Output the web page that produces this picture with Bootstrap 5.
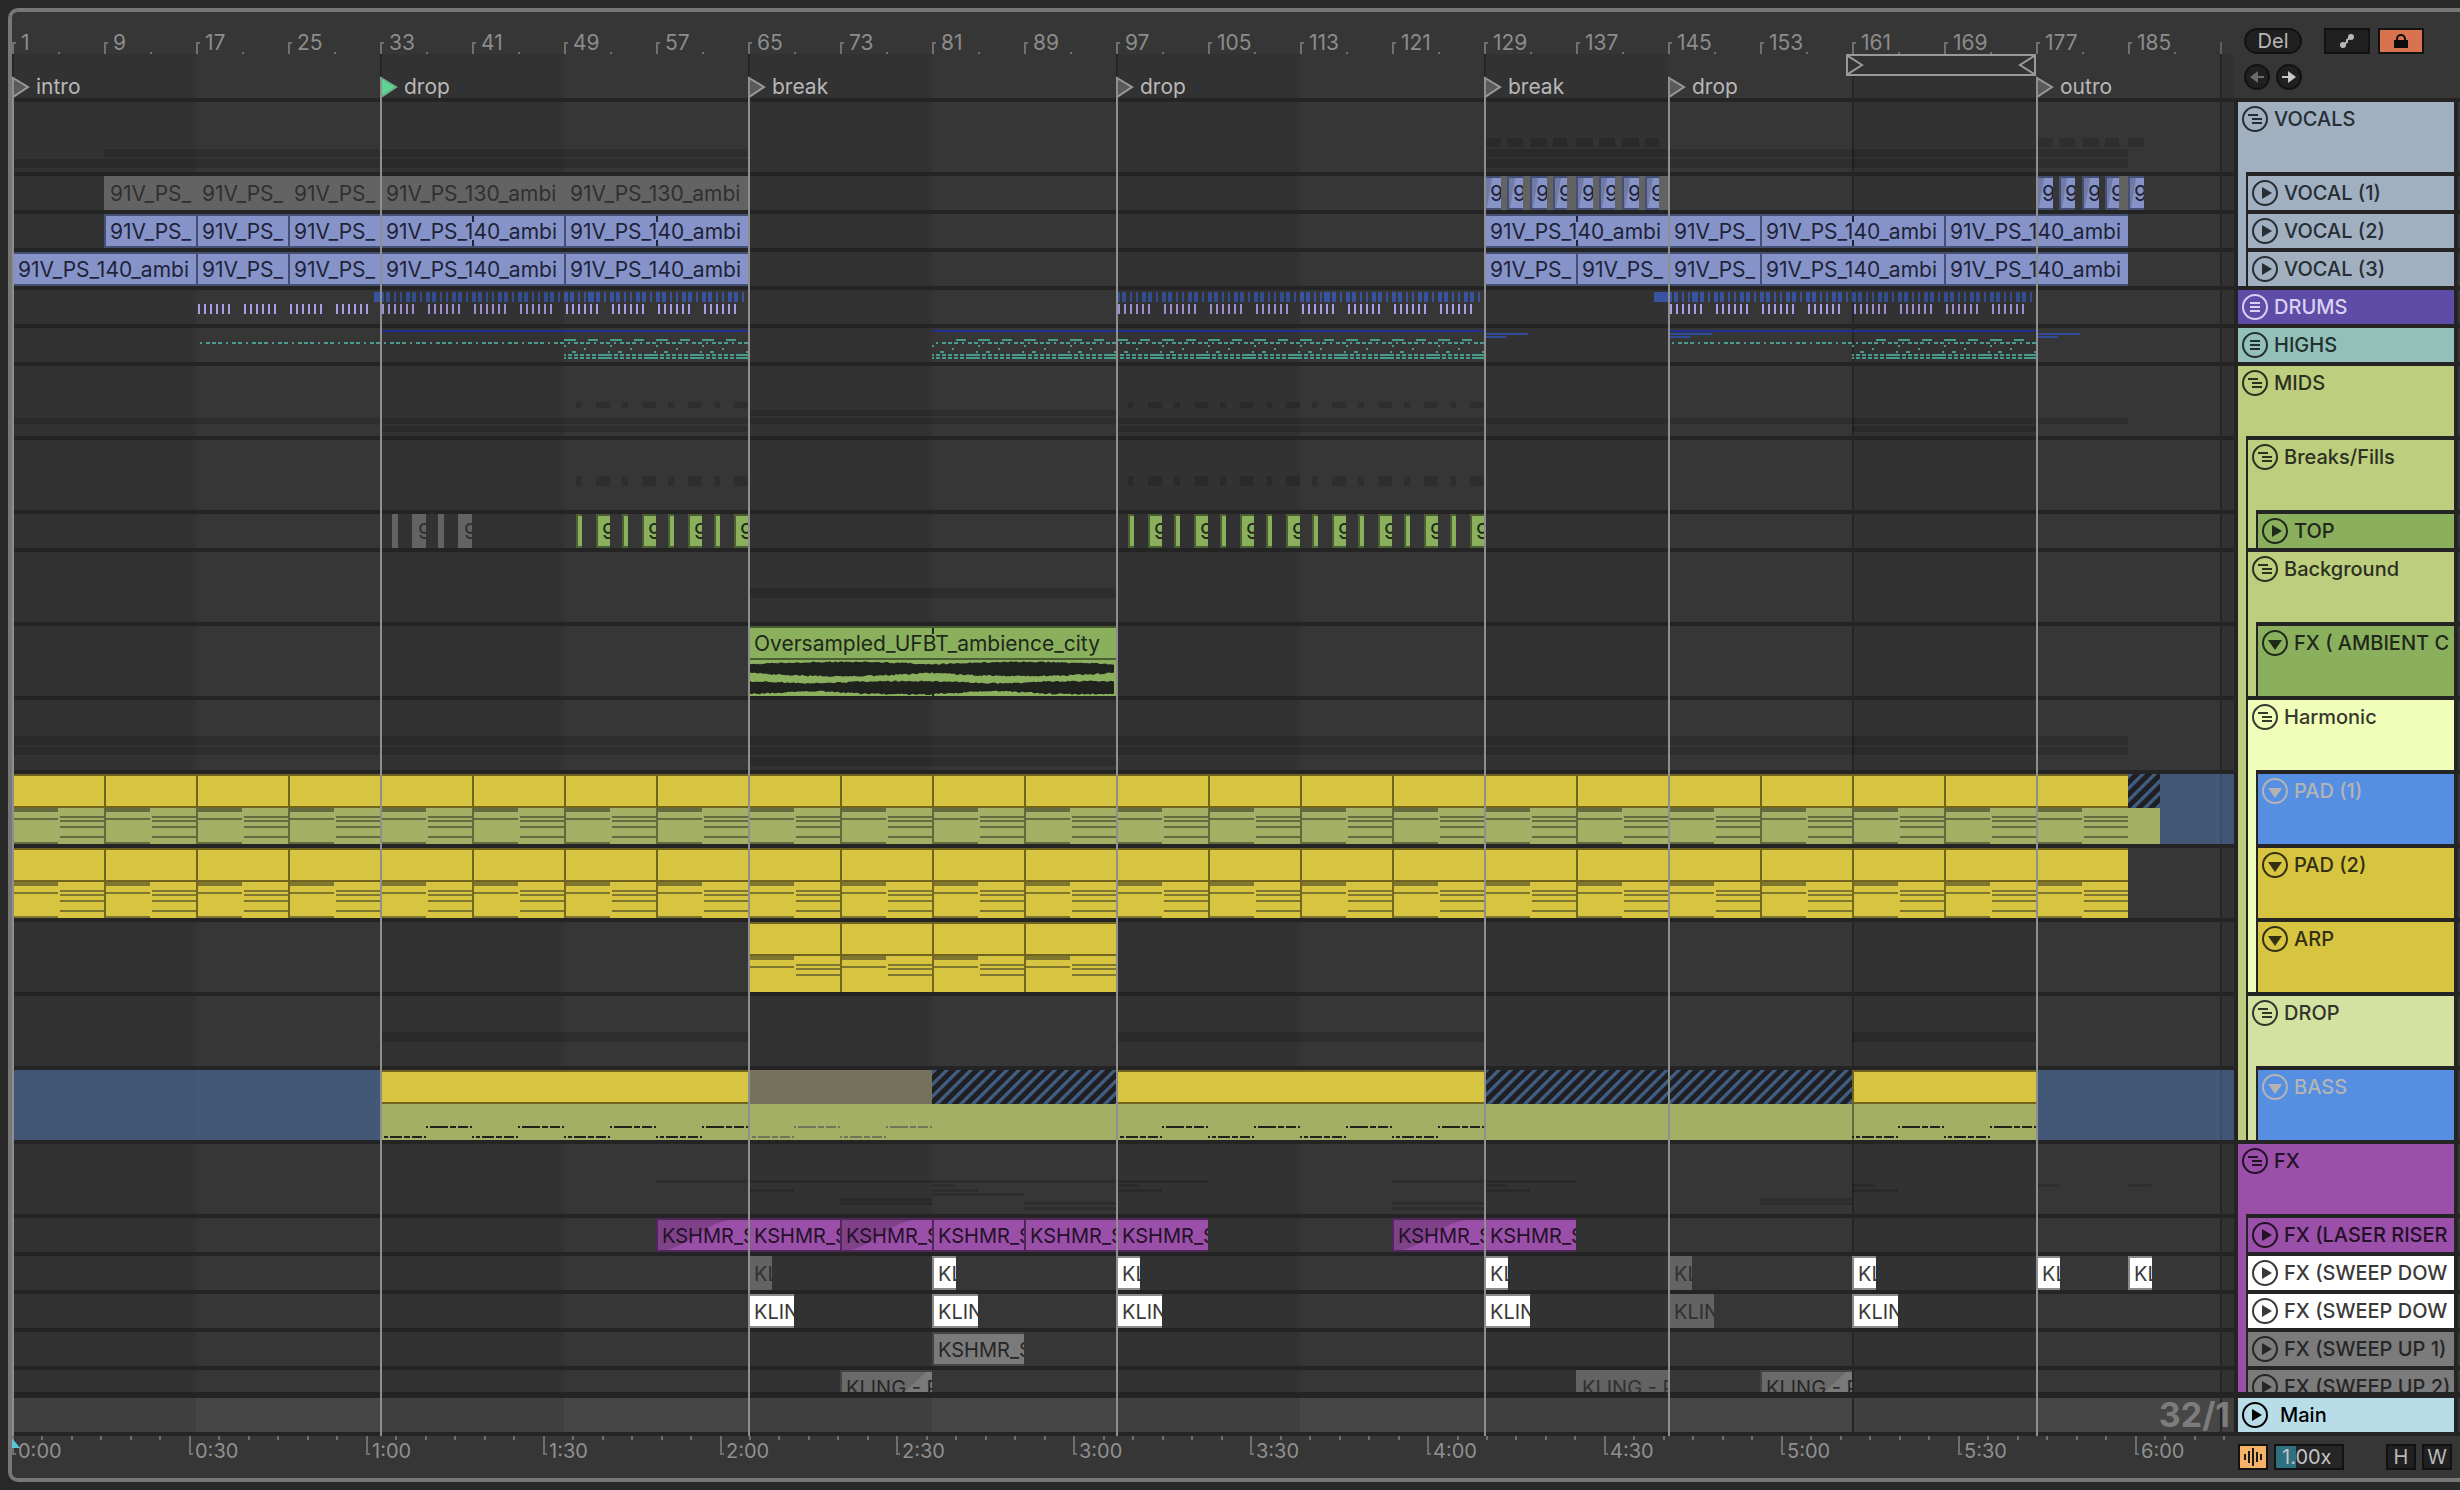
<!DOCTYPE html>
<html lang="en">
<head>
<meta charset="utf-8">
<meta name="viewport" content="width=device-width, initial-scale=1">
<title>Arrangement</title>
<link href="https://cdn.jsdelivr.net/npm/bootstrap@5.3.0/dist/css/bootstrap.min.css" rel="stylesheet">
<style>
:root { --gap: #242424; --panel: #363636; --shade: #323232; --frame: #777; --line: #252525; --side: 226px; }
body { background: #282828; font-family: Inter, "Liberation Sans", sans-serif; font-size: 20px; line-height: 24px; color: #999; }
.arrangement { height: 100vh; padding: 8px 0 8px 8px; }
.frame { border: 4px solid var(--frame); border-right: 0; border-radius: 10px 0 0 10px; background: var(--gap); overflow: hidden; }
.timeline { min-width: 0; overflow: hidden; }
.side { width: var(--side); flex: none; }
.grid-bg {
  background-image:
    repeating-linear-gradient(90deg, #252525 0 2px, transparent 2px 368px),
    repeating-linear-gradient(90deg, var(--shade) 0 184px, var(--panel) 184px 368px);
}
.lane {
  position: relative; overflow: hidden; margin-top: 4px;
  background-image:
    linear-gradient(90deg, transparent 1840px, var(--line) 1840px 1842px, transparent 1842px 2208px, var(--line) 2208px 2210px, transparent 2210px),
    repeating-linear-gradient(90deg, var(--shade) 0 184px, var(--panel) 184px 368px);
}
.lane.selected { --shade: #405674; --panel: #435876; --line: #394e6b; }
.lane svg.notes { position: absolute; inset: 0; width: 100%; height: 100%; pointer-events: none; }

/* top rulers */
.topbar { background: var(--panel); height: 86px; }
.bars { height: 42px; overflow: hidden; color: #8c8c8c; font-size: 21px; }
.bars > div {
  width: 92px; flex: none; padding: 19px 0 0 9px;
  background:
    linear-gradient(#707070, #707070) 0 30px / 2px 12px no-repeat,
    linear-gradient(#707070, #707070) 0 30px / 4px 2px no-repeat,
    linear-gradient(#707070, #707070) 46px 40px / 2px 2px no-repeat;
}
.bars > div:last-child { background: linear-gradient(#606060, #606060) 0 30px / 2px 12px no-repeat; }
.locators { height: 44px; position: relative; overflow: hidden; }
.locator { position: absolute; top: 22px; gap: 6px; color: #b8b8b8; line-height: 22px; border: 0; background: none; padding: 0; font-size: 21px; }
.locator svg { display: block; }
.brace { position: absolute; top: 0; height: 22px; border: 2px solid #999; background: #333; }
.cue-lines { position: absolute; inset: 65px var(--side) 42px 0; pointer-events: none; overflow: hidden; }
.cue-lines i { position: absolute; top: 0; bottom: 0; width: 2px; background: #8e8e8e; }
.side-tools { padding: 16px 0 0 6px; }
.side-nav { padding: 10px 0 0 6px; gap: 6px; }
.pill, .tool { border: 2px solid #121212; background: #202020; color: #b8b8b8; height: 26px; padding: 0; line-height: 22px; display: flex; align-items: center; justify-content: center; }
.pill { width: 58px; border-radius: 13px; }
.round { width: 26px; border-radius: 50%; }
.tool { width: 46px; }
.tool.locked { background: #d9734f; }
.key { width: 30px; }
.follow { background: #f6b266; }
.gap-left { margin-left: 6px; }
.gap-wide { margin-left: 22px; }
.tempo { width: 70px; height: 26px; border: 2px solid #121212; padding: 0 0 0 6px; color: #c4c4c4; line-height: 22px; background: linear-gradient(90deg, #2f7080 20px, #262626 20px); border-radius: 0; outline: 0; }

/* tracks */
.tracks { min-height: 0; overflow: hidden; }
.head { color: #262e34; font-weight: 500; }
.strip { width: 8px; flex: none; margin-right: 2px; }
.title-bar { margin-top: 4px; padding: 4px 0 0 4px; min-width: 0; flex: 1; overflow: hidden; white-space: nowrap; }
.title-bar button { border: 0; padding: 0; background: none; color: inherit; width: 26px; height: 26px; flex: none; }
.title-bar svg, .tool svg, .round svg { display: block; flex: none; }
.title-bar span { line-height: 26px; margin-left: 6px; }
.title-bar .master-name { margin-left: 12px; }
.rail { width: 2px; flex: none; margin: 4px 0 0 4px; background: #363636; }

/* clips */
.clip { position: absolute; top: 0; bottom: 0; overflow: hidden; white-space: nowrap; font-size: 21px; line-height: 32px; padding-left: 4px; border: 0 solid var(--edge); border-width: 2px 0 2px 2px; background: var(--fill); color: var(--ink); }
.clip .fade-in { position: absolute; left: 0; top: 0; height: 100%; }
.clip .fade-in + span { position: relative; }
.clip.blue { --fill: #8693c8; --edge: #454f73; --ink: #1f2338; }
.clip.green { --fill: #8ab05d; --edge: #4b6032; --ink: #20281a; }
.clip.purple { --fill: #9a50a9; --edge: #4e2856; --ink: #241128; }
.clip.white { --fill: #fff; --edge: #8a8a8a; --ink: #3a3a3a; }
.clip.gray { --fill: #7a7a7a; --edge: #444; --ink: #262626; }
.clip.muted { --fill: #636363; --edge: #636363; --ink: #303030; }
.clip.effect { font-size: 20px; }
.clip.tall { padding: 0; border-width: 0; background: none; }
.clip.tall .cap { height: 34px; border: 2px solid #70641f; border-width: 2px 0 2px 0; background: #d7c441; padding-left: 6px; line-height: 32px; color: #20281a; }
.clip.tall .pane { height: 36px; background: #d7c441; }
.clip.tall.sel .pane { background: #a2af64; }
.clip.tall.edge .cap { border-left: 2px solid #70641f; }
.clip.tall.edge .pane { border-left: 2px solid #746821; }
.clip.tall.sel.edge .pane { border-left-color: #62693e; }
.clip.tall.off .cap { background: #76725d; border-color: #76725d; }
.clip.tall.hatch .cap { border: 0; background: linear-gradient(135deg, #425c7e 0 20%, #1e2024 24% 50%, #425c7e 52% 70%, #1e2024 74%) 0 0 / 12px 12px; }
.clip.tall.audio .cap { background: #8ab05d; border-color: #4b6032; }
.clip.tall.audio .pane { background: #8ab05d; }

.main-row { border-top: 2px solid var(--gap); border-bottom: 4px solid var(--gap); height: 44px; }
.main-row .lane { --shade: #404040; --panel: #464646; border-left: 2px solid #b8dce8; background-position: -2px 0; }
.grid-size { position: absolute; right: 4px; top: 0; font-size: 34px; font-weight: 700; line-height: 34px; color: #7c7c7c; }
.footer-bar { background: var(--panel); height: 42px; }
.clock { position: relative; overflow: hidden; color: #909090; }
.clock i { position: absolute; top: 0; width: 2px; height: 4px; background: #6e6e6e; }
.clock span { position: absolute; top: 0; height: 19px; padding: 3px 0 0 4px; border-left: 2px solid #6e6e6e; line-height: 24px; background: linear-gradient(#6e6e6e, #6e6e6e) 0 17px / 2px 2px no-repeat; }
.clock svg { position: absolute; left: 0; top: 2px; }
.side-foot { padding: 8px 8px 0 4px; }
</style>
</head>
<body class="m-0 overflow-hidden">
<main class="arrangement">
  <div class="frame d-flex flex-column h-100 position-relative">

    <header class="topbar d-flex flex-shrink-0">
      <div class="timeline flex-grow-1">
        <div class="bars d-flex" id="bars"></div>
        <div class="locators grid-bg" id="locators"></div>
      </div>
      <div class="side ps-1">
        <div class="side-tools d-flex">
          <button class="pill" type="button">Del</button>
          <button class="tool gap-wide" type="button" aria-label="Automation mode">
            <svg width="42" height="22" viewBox="0 0 42 22" fill="#b8b8b8"><circle cx="17" cy="15" r="3"/><circle cx="25" cy="7" r="3"/><path d="M17 15l4-3 0-2 4-3" stroke="#b8b8b8" stroke-width="2" fill="none"/></svg>
          </button>
          <button class="tool locked ms-2" type="button" aria-label="Lock envelopes">
            <svg width="42" height="22" viewBox="0 0 42 22"><path d="M14 10h14v8H14z" fill="#0c0c0c"/><path d="M17 11V9a4 4 0 0 1 8 0v2" stroke="#0c0c0c" stroke-width="2" fill="none"/></svg>
          </button>
        </div>
        <div class="side-nav d-flex" id="nav"></div>
      </div>
    </header>

    <section class="tracks flex-grow-1" id="tracks"></section>

    <section class="main-row d-flex flex-shrink-0">
      <div class="timeline lane flex-grow-1"><div class="grid-size">32/1</div></div>
      <div class="side head d-flex ps-1">
        <div class="title-bar d-flex text-black" style="background:#b8dce8">
          <button type="button" aria-label="Unfold Main"><svg width="26" height="26" viewBox="0 0 26 26"><circle cx="13" cy="13" r="12" fill="none" stroke="currentColor" stroke-width="2"/><path d="M10 7l10 6-10 6z" fill="currentColor"/></svg></button>
          <span class="master-name">Main</span>
        </div>
        <div class="rail"></div>
      </div>
    </section>

    <footer class="footer-bar d-flex flex-shrink-0">
      <div class="timeline clock flex-grow-1" id="clock"></div>
      <div class="side side-foot d-flex">
        <button class="tool key follow" type="button" aria-label="Follow audio">
          <svg width="26" height="22" viewBox="0 0 26 22"><path d="M5 8v6M9 5v12M13 2v18M17 6v10M21 8v6" stroke="#1a1a1a" stroke-width="2"/></svg>
        </button>
        <input class="tempo gap-left" value="1.00x" aria-label="Waveform zoom">
        <button class="tool key ms-auto" type="button">H</button>
        <button class="tool key gap-left" type="button">W</button>
      </div>
    </footer>

    <div class="cue-lines" id="cues"></div>
  </div>
</main>

<script src="https://cdn.jsdelivr.net/npm/bootstrap@5.3.0/dist/js/bootstrap.bundle.min.js"></script>
<script>
// zoom level: 92px for eight bars
const X = bar => Math.round((bar - 1) * 92 / 8);
const $ = id => document.getElementById(id);
const range = (a, b, s) => { const r = []; for (let i = a; i < b; i += s) r.push(i); return r; };

// navigation arrows
$('nav').innerHTML = [['Previous', '#6c6c6c', 'M6 13l8-6v5h6v2h-6v5z'], ['Next', '#c8c8c8', 'M20 13l-8-6v5H6v2h6v5z']].map(([n, c, d]) =>
  `<button class="pill round" type="button" aria-label="${n} locator"><svg width="26" height="26" viewBox="0 0 26 26" fill="${c}"><path d="${d}"/></svg></button>`).join('');

// rulers
$('bars').innerHTML = range(1, 194, 8).map(b => `<div>${b < 193 ? b : ''}</div>`).join('');
const cues = [[1, 'intro'], [33, 'drop', 1], [65, 'break'], [97, 'drop'], [129, 'break'], [145, 'drop'], [177, 'outro']];
$('locators').innerHTML = cues.map(([b, n, on]) =>
  `<button type="button" class="locator d-flex" style="left:${X(b)}px"><svg width="18" height="22" viewBox="0 0 18 22"><path d="M1 2l15 9-15 10z" fill="${on ? '#5fd68f' : '#5a5a5a'}" stroke="${on ? '#6fae8c' : '#999'}" stroke-width="2"/></svg>${n}</button>`).join('') +
  `<div class="brace" style="left:${X(161) - 6}px;width:${X(177) - X(161) + 6}px"><svg class="d-block" width="100%" height="18"><path d="M0 0l14 9-14 9" fill="none" stroke="#999" stroke-width="2"/><svg x="100%" overflow="visible"><path d="M0 0l-14 9 14 9" fill="none" stroke="#999" stroke-width="2"/></svg></svg></div>`;
$('cues').innerHTML = cues.map(c => `<i style="left:${X(c[0])}px"></i>`).join('');
let clock = '';
for (let s = 0; s <= 375; s += 5) {
  const x = Math.round(s * 5.896);
  clock += s % 30 ? `<i style="left:${x}px"></i>` : `<span style="left:${x}px">${Math.floor(s / 60)}:${s % 60 ? '30' : '00'}</span>`;
}
$('clock').innerHTML = clock + '<svg width="8" height="10"><path d="M0 0l8 10H0z" fill="#5cc5d8"/></svg>';

// builders
const rect = (x, y, w, h, f, o) => `<rect x="${x}" y="${y}" width="${w}" height="${h}" fill="${f}"${o ? ` opacity="${o}"` : ''}/>`;
const ghost = (y, h, spans) => spans.map(([a, b]) => rect(X(a), y, X(b) - X(a), h, '#000', .14)).join('');
const svg = s => `<svg class="notes">${s}</svg>`;
const box = (x, w, cls, text, extra) => `<div class="clip ${cls}" style="left:${x}px;width:${w}px">${extra || ''}<span>${text || ''}</span></div>`;
const clip = (a, b, cls, text, extra) => box(X(a), X(b) - X(a), cls, text, extra);
const tall = (a, b, cls, text) => `<div class="clip tall ${cls}" style="left:${X(a)}px;width:${X(b) - X(a)}px"><div class="cap">${text || ''}</div><div class="pane"></div></div>`;
const mark = (b, h, c) => rect(X(b), 2, 2, 6, c) + rect(X(b), h - 8, 2, 6, c);
const L = '91V_PS_140_ambi', S = '91V_PS_';

const riseFade = '<svg class="fade-in" width="74" height="30"><path d="M0 0H74C48 2 40 20 10 30H0z" fill="#7f4289"/></svg>';
const lineFade = '<svg class="fade-in" width="84" height="34"><path d="M0 0H84L48 34H0z" fill="#6a6a6a"/></svg>';
const nickFade = '<svg class="fade-in" width="6" height="30"><path d="M0 0H6L1 30H0z" fill="#6f7aa6"/></svg>';

// vocals
const chop = [[0, 17], [23, 16], [46, 17], [69, 14]];
const chopsA = [129, 137].flatMap(b => chop.map(([o, w]) => [X(b) + o, w]));
const chopsB = [...chop.map(([o, w]) => [X(177) + o, w]), [X(185), 16]];
const chops = [...chopsA, ...chopsB];
const vocal1 = clip(9, 17, 'muted', S) + clip(17, 25, 'muted', S) + clip(25, 33, 'muted', S) + clip(33, 49, 'muted', '91V_PS_130_ambi') + clip(49, 65, 'muted', '91V_PS_130_ambi') +
  clip(129, 145, 'muted') + box(X(177) + 83, 9, 'muted') + chops.map(([x, w]) => box(x, w, 'blue', '9', nickFade)).join('');
const blues = list => list.map(([a, b]) => clip(a, b, 'blue', b - a > 8 ? L : S)).join('');
const vocal2 = blues([[9, 17], [17, 25], [25, 33], [33, 49], [49, 65], [129, 145], [145, 153], [153, 169], [169, 185]]) +
  svg([41, 57, 137, 161].map(b => mark(b, 34, '#1f2338')).join(''));
const vocal3 = blues([[1, 17], [17, 25], [25, 33], [33, 49], [49, 65], [129, 137], [137, 145], [145, 153], [153, 169], [169, 185]]);

// drums
let drums = '';
for (const [a, b] of [[33, 65], [97, 129], [145, 177]]) {
  for (const p of range(a, b, 4)) {
    const lead = (p - 1) % 32 === 16, c = (p - 1) % 32 >= 16 ? '#3854a0' : '#334d90';
    for (const [o, w] of [[0, 4], [6, 4], [14, 2], [20, 2], lead ? [24, 6] : [26, 4], [32, 4], [40, 2]]) drums += rect(X(p) + o, 2, w, 10, c);
  }
  if (a !== 97) drums += rect(X(a) - (a === 145 ? 14 : 6), 2, a === 145 ? 14 : 6, 10, '#3854a0');
}
for (const [a, b] of [[17, 65], [97, 129], [145, 177]]) for (const p of range(a, b, 4))
  for (let i = 0; i < 6; i++) drums += rect(X(p) + 2 + i * 6, 14, 2, 10, (p - 1) % 32 >= 16 ? '#ac9be6' : '#9f8fd0');

// highs
let highs = '';
for (const [a, b] of [[33, 65], [81, 129], [145, 177]]) highs += rect(X(a), 2, X(b) - X(a), 2, '#222d92');
for (const b of [129, 145, 177]) highs += rect(X(b), 5, 44, 2, '#2f4b9a') + rect(X(b), 8, 22, 2, '#2f4b9a');
const teal = '#469b8d';
for (const [a, b] of [[17, 65], [81, 129], [145, 177]]) for (const p of range(a, b, 4))
  for (const [o, w] of [[4, 2], [10, 4], [16, 4], [22, 4], [30, 2], [36, 4], [42, 4]]) highs += rect(X(p) + o, 14, w, 2, teal);
for (const [a, b] of [[49, 65], [81, 129], [161, 177]]) for (const p of range(a, b, 4)) {
  const x = X(p);
  if (!(p === a && a !== 49)) highs += rect(x, 11, 12, 2, teal);
  highs += rect(x + 24, 11, 10, 2, teal) + rect(x, 17, 2, 2, teal) + rect(x + 20, 20, 2, 2, teal) + rect(x + 8, 23, 4, 2, teal) + rect(x + 44, 23, 2, 2, teal);
  for (const y of [26, 29]) for (const [o, w] of [[0, 2], [4, 4], [10, 4], [16, 4], [22, 4], [28, 4], [34, 12]]) highs += rect(x + o, y, w, 2, teal);
}

// fills
const hits = (a, b) => range(a, b, 4).flatMap(p => [[X(p) + 12, 6, ''], [X(p) + 32, 14, '9']]);
const fills = [...hits(49, 65), ...hits(97, 129)];
const shadowHits = (y, h) => fills.map(([x, w]) => rect(x, y, w, h, '#000', .14)).join('');
const top_ = hits(33, 41).map(([x, w, t]) => box(x, w, 'muted', t)).join('') + fills.map(([x, w, t]) => box(x, w, 'green', t)).join('');

// ambience waveform: two channels, loop of sixteen bars
const noise = i => { const v = Math.sin(i * 127.1) * 43758.5453; return v - Math.floor(v); };
function channel(topOf, botOf, seed) {
  let up = '', down = '';
  for (let i = 0; i <= 366; i += 2) {
    const t = (i % 184) / 184;
    up += `L${i} ${(topOf(t) + noise(i + seed) * 1.4).toFixed(1)}`;
    down = `L${i} ${(botOf(t) - noise(i + seed + 9) * 1.6).toFixed(1)}` + down;
  }
  return `<path d="M0 ${topOf(0)}${up}${down}z" fill="#20231d"/>`;
}
const swell = t => Math.sin(Math.PI * t);
const dip = t => Math.exp(-Math.pow((t - .35) / .22, 2));
const wave = `<svg x="${X(65)}" y="34" width="368" height="36">` +
  channel(t => 3.6 - 2.4 * swell(t), t => 13.6 + 3.4 * swell(t), 3) +
  channel(t => 20.4 + 2.2 * dip(t), t => 35 - 3 * dip(t), 51) + '</svg>';
const ambient = tall(65, 97, 'audio', 'Oversampled_UFBT_ambience_city') + svg(wave + rect(X(81), 2, 2, 6, '#20231d') + rect(X(81), 64, 2, 6, '#20231d'));

// pads
const dark = '#20221c';
function padNotes(a, b, arp) {
  let s = '';
  for (const p of range(a, b, 8)) {
    const x = X(p), d = (o, y, w, h) => rect(x + o, y, w, h, dark, .48);
    s += d(2, 34, 44, 4) + d(2, 44, 44, 2);
    if (!arp) s += d(2, 68, 44, 2);
    for (const y of arp ? [42, 46, 52] : [42, 46, 52, 62]) s += d(48, y, 44, 2);
  }
  return svg(s);
}
const pads = (a, b, cls) => range(a, b, 8).map(p => tall(p, p + 8, 'edge ' + cls)).join('');

// bass
let bass = '';
for (const [a, b, c] of [[33, 65, dark], [65, 81, '#70775a'], [97, 129, dark], [161, 177, dark]]) for (const p of range(a, b, 8)) {
  for (const [o, w] of [[0, 2], [4, 4], [10, 12], [24, 6], [32, 10], [44, 2]]) bass += rect(X(p) + o, 66, w, 2, c);
  for (const [o, w] of [[46, 2], [50, 18], [70, 6], [78, 10], [90, 2]]) bass += rect(X(p) + o, 56, w, 2, c);
}
const bassLane = tall(33, 65, 'sel') + tall(65, 81, 'sel off') + tall(81, 97, 'sel hatch') + tall(97, 129, 'sel') + tall(129, 161, 'sel hatch') + tall(161, 177, 'sel edge') + svg(bass);

// effects overview
const spans = (starts, len) => starts.map(a => [a, a + len]);
const fxGhost = [
  [36, [[57, 105], [121, 137]]],
  [40, spans([81, 97, 129, 161, 177, 185], 2)],
  [45, spans([65, 81, 97, 129, 161], 4)],
  [49, [[81, 89]]],
  [54, spans([73, 153], 8)],
  [58, spans([73, 89, 121, 153], 8)],
  [63, spans([89, 121], 8)]
].map(([y, s]) => ghost(y, 3, s)).join('');
const K = 'KSHMR_S';
const laser = [57, 65, 73, 81, 89, 97, 121, 129].map(p => clip(p, p + 8, 'effect purple', K, [57, 73, 121].includes(p) ? riseFade : '')).join('');
const sweep1 = [65, 81, 97, 129, 145, 161, 177, 185].map(p => box(X(p), 24, 'effect ' + (p === 65 || p === 145 ? 'muted' : 'white'), 'KL')).join('');
const sweep2 = [65, 81, 97, 129, 145, 161].map(p => box(X(p), 46, 'effect ' + (p === 145 ? 'muted' : 'white'), 'KLIN')).join('');
const up2 = clip(73, 81, 'effect gray', 'KLING - P', lineFade) + clip(137, 145, 'effect muted', 'KLING - P') + clip(153, 161, 'effect gray', 'KLING - P', lineFade);

// track list: name, height, colour, ink, icon, parent strips, lane content, selected
const V = '#a0b0c1', M = '#bdce7e', H = '#f0feb9', D = '#d3e2a0', F = '#9a50a9', Y = '#d7c441', G = '#8ab05d';
const tracks = [
  ['VOCALS', 70, V, '', 'group', [], svg(chops.map(([x, w]) => rect(x, 36, w, 9, '#000', .14)).join('') + ghost(47, 8, [[9, 65], [129, 185]]) + ghost(57, 9, [[1, 65], [129, 185]]))],
  ['VOCAL (1)', 34, V, '', 'play', [V], vocal1],
  ['VOCAL (2)', 34, V, '', 'play', [V], vocal2],
  ['VOCAL (3)', 34, V, '', 'play', [V], vocal3],
  ['DRUMS', 34, '#5f4ca6', '#d9d1f3', 'list', [], svg(drums)],
  ['HIGHS', 34, '#94c0ba', '#22302e', 'list', [], svg(highs)],
  ['MIDS', 70, M, '#2c3020', 'group', [], svg(shadowHits(36, 6) + ghost(44, 6, [[65, 97]]) + ghost(52, 6, [[1, 185]]) + ghost(60, 6, [[33, 65], [97, 129], [161, 177]]))],
  ['Breaks/Fills', 70, M, '#2c3020', 'group', [M], svg(shadowHits(36, 10))],
  ['TOP', 34, G, '#20281a', 'play', [M, M], top_],
  ['Background', 70, M, '#2c3020', 'group', [M], svg(ghost(36, 10, [[65, 97]]))],
  ['FX ( AMBIENT C', 70, G, '#20281a', 'fold', [M, M], ambient],
  ['Harmonic', 70, H, '#363a2c', 'group', [M], svg(ghost(36, 9, [[1, 185]]) + ghost(47, 8, [[1, 185]]) + ghost(57, 9, [[65, 97]]))],
  ['PAD (1)', 70, '#568fe2', '#b4b4b4', 'fold', [M, H], pads(1, 185, 'sel') + `<div class="clip tall sel hatch" style="left:${X(185)}px;width:32px"><div class="cap"></div><div class="pane"></div></div>` + padNotes(1, 185), 1],
  ['PAD (2)', 70, Y, '#333012', 'fold', [M, H], pads(1, 185, '') + padNotes(1, 185)],
  ['ARP', 70, Y, '#333012', 'fold', [M, H], pads(65, 97, '') + padNotes(65, 97, 1)],
  ['DROP', 70, D, '#30342a', 'group', [M], svg(ghost(36, 10, [[33, 65], [97, 129], [161, 177]]))],
  ['BASS', 70, '#568fe2', '#b4b4b4', 'fold', [M, D], bassLane, 1],
  ['FX', 70, F, '#241128', 'group', [], svg(fxGhost)],
  ['FX (LASER RISER', 34, F, '#241128', 'play', [F], laser],
  ['FX (SWEEP DOW', 34, '#fff', '#3a3a3a', 'play', [F], sweep1],
  ['FX (SWEEP DOW', 34, '#fff', '#3a3a3a', 'play', [F], sweep2],
  ['FX (SWEEP UP 1)', 34, '#7b7b7b', '#262626', 'play', [F], clip(81, 89, 'effect gray', K)],
  ['FX (SWEEP UP 2)', 34, '#7b7b7b', '#262626', 'play', [F], up2]
];
const glyph = {
  group: '<path d="M6 9h10M10 13h10M10 17h10" stroke="currentColor" stroke-width="2"/>',
  list: '<path d="M8 9h10M8 13h10M8 17h10" stroke="currentColor" stroke-width="2"/>',
  play: '<path d="M10 7l10 6-10 6z" fill="currentColor"/>',
  fold: '<path d="M6 10h14l-7 10z" fill="currentColor"/>'
};
$('tracks').innerHTML = tracks.map(([name, h, fill, ink, icon, strips, body, sel]) =>
  `<div class="d-flex" style="height:${h + 4}px">
    <div class="timeline lane flex-grow-1${sel ? ' selected' : ''}">${body}</div>
    <div class="side head d-flex ps-1">${strips.map(c => `<div class="strip" style="background:${c}"></div>`).join('')}
      <div class="title-bar d-flex align-items-start" style="background:${fill}${ink ? ';color:' + ink : ''}"><button type="button" aria-label="Fold ${name}"><svg width="26" height="26" viewBox="0 0 26 26"><circle cx="13" cy="13" r="12" fill="none" stroke="currentColor" stroke-width="2"/>${glyph[icon]}</svg></button><span>${name}</span></div>
      <div class="rail"></div>
    </div>
  </div>`).join('');
</script>
</body>
</html>
